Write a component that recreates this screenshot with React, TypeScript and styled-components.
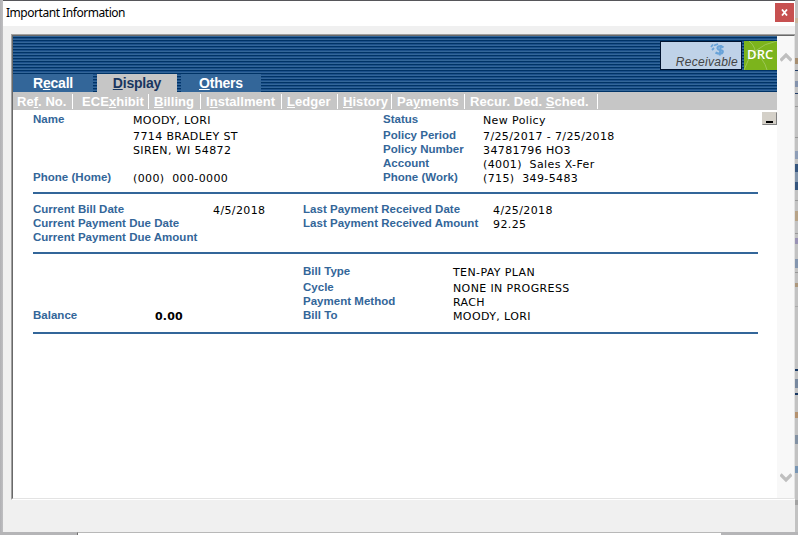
import React from "react";
import styled, { createGlobalStyle } from "styled-components";

const Global = createGlobalStyle`
  *{box-sizing:border-box}
  body{margin:0;overflow:hidden;background:#b9b9bb}
`;
const Desktop = styled.div`
  width:798px;height:535px;display:grid;grid-template-columns:3px 792px 3px;grid-template-rows:532px 3px;
  background:#b9b9bb;overflow:hidden;
`;
const Edge = styled.div`background:linear-gradient(90deg,#b0b0b4,#bfbfc1);`;
const Dialog = styled.div`
  border-top:1px solid #56565a;background:#f0f0f0;display:flex;flex-direction:column;
`;
const TitleBar = styled.div`
  height:25px;flex:none;background:#fff;display:flex;justify-content:space-between;padding:2px 1px 0 3px;
  font:12px/20px "Noto Sans",sans-serif;color:#000;letter-spacing:-0.46px;
`;
const Close = styled.button`
  width:19px;height:19px;border:0;padding:0;background:#c75050;display:flex;align-items:center;justify-content:center;
`;
const Frame = styled.div`
  margin:8px 0 0 8px;height:466px;border:1px solid;border-color:#a0a0a0 #fff #fff #a0a0a0;border-right-width:0;
`;
const Inner = styled.div`
  height:464px;border:1px solid;border-color:#696969 #e3e3e3 #e3e3e3 #696969;display:flex;background:#fff;
`;
const Page = styled.div`width:764px;flex:none;`;
const Header = styled.div`
  height:56px;display:flex;flex-direction:column;justify-content:space-between;
  background:repeating-linear-gradient(180deg,#336699 0 1px,#003366 1px 2px,#1c508a 2px 3px);
`;
const Logos = styled.div`display:flex;justify-content:flex-end;gap:2px;padding-top:5px;height:34px;`;
const Receivable = styled.div`
  width:82px;height:29px;border:1px solid #001330;background:#bfd2e8;display:flex;flex-direction:column;align-items:flex-end;
  padding:1px 3px 0 0;font:italic 12px/13px "Liberation Sans",sans-serif;color:#444;letter-spacing:.28px;
  svg{margin-right:12px;flex:none}
`;
const Drc = styled.div`
  width:33px;height:29px;background:#7cb41c;display:grid;
  font:600 13px/27px "Open Sans",sans-serif;color:#fff;letter-spacing:.1px;
  >*{grid-area:1/1} span{padding-left:3px}
`;
const Tabs = styled.div`display:flex;gap:4px;`;
const Tab = styled.div<{ $active?: boolean }>`
  width:80px;height:18px;text-align:center;font:bold 14px/19px "Liberation Sans",sans-serif;letter-spacing:-.2px;
  color:${p => p.$active ? "#193660" : "#fff"};background:${p => p.$active ? "#c6c6c6" : "#336699"};
  u{text-underline-offset:1px;text-decoration-thickness:1px}
`;
const Menu = styled.div`
  height:18px;background:#c6c6c6;display:flex;padding:1px 0 0 4px;
  font:bold 13px/17px "Liberation Sans",sans-serif;color:#fff;letter-spacing:.05px;
`;
const MenuItem = styled.span<{ $w: number; $pad?: number }>`
  width:${p => p.$w}px;padding-left:${p => p.$pad ?? 0}px;flex:none;white-space:nowrap;display:flex;justify-content:space-between;
  u{text-underline-offset:1px;text-decoration-thickness:1px}
  i{width:1px;height:15px;background:#fff;margin:1px 5px 0 0}
`;
const Content = styled.div`display:grid;grid-template-columns:1fr 15px;padding-left:20px;padding-top:2px;`;
const Sheet = styled.div`width:725px;`;
const Section = styled.div<{ $cols: string; $top: number; $h: number; $first: number }>`
  display:grid;grid-template-columns:${p => p.$cols};grid-template-rows:${p => p.$first}px;grid-auto-rows:14px;
  height:${p => p.$h}px;padding-top:${p => p.$top}px;border-bottom:2px solid #336699;
`;
const Label = styled.span`
  font:bold 11.5px/14px "Liberation Sans",sans-serif;color:#336699;letter-spacing:.02px;white-space:pre;
`;
const Value = styled.span<{ $bold?: boolean; $pad?: number }>`
  font:${p => p.$bold ? "bold" : "normal"} 11px/18px "DejaVu Sans",sans-serif;color:#000;white-space:pre;
  letter-spacing:${p => p.$bold ? .2 : .38}px;padding-left:${p => p.$pad ?? 0}px;
`;
const Minimize = styled.button`
  width:15px;height:13px;padding:0;border:1px solid;border-color:#d4d0c8 #808080 #808080 #d4d0c8;background:#d4d0c8;
  display:flex;align-items:flex-end;justify-content:center;
  &::after{content:"";width:7px;height:2px;margin-bottom:1px;background:#000}
`;
const Scroll = styled.div`
  width:17px;background:#f8f8f8;display:flex;flex-direction:column;justify-content:space-between;align-items:center;padding:15px 0 14px;
`;
const SideStrip = styled.div`background:#c2c2c2;display:flex;flex-direction:column;`;
const Mark = styled.i<{ $gap: number; $h: number; $c: string }>`
  display:block;flex:none;margin-top:${p => p.$gap}px;height:${p => p.$h}px;background:${p => p.$c};
`;
const Bottom = styled.div`
  grid-column:1/-1;display:grid;grid-template-columns:77px 644px 77px;
`;
const BottomPart = styled.div<{ $white?: boolean }>`
  background:${p => p.$white ? "#fff" : "#b5b5b7"};
  border-top:${p => p.$white ? "1px solid #b8b8b8" : "0"};border-left:${p => p.$white ? "1px solid #707070" : "0"};
`;

const menu: [React.ReactNode, number, number?][] = [
  [<>Re<u>f</u>. No.</>, 61], [<>ECE<u>x</u>hibit</>, 76, 4], [<><u>B</u>illing</>, 52], [<>I<u>n</u>stallment</>, 81],
  [<><u>L</u>edger</>, 56], [<><u>H</u>istory</>, 54], [<>Pa<u>y</u>ments</>, 73], [<>Recur. Ded. <u>S</u>ched.</>, 133],
];
const customer = [
  ["Name", "MOODY, LORI", "Status", "New Policy"],
  ["", "7714 BRADLEY ST", "Policy Period", "7/25/2017 - 7/25/2018"],
  ["", "SIREN, WI 54872", "Policy Number", "34781796 HO3"],
  ["", "", "Account", "(4001)  Sales X-Fer"],
  ["Phone (Home)", "(000)  000-0000", "Phone (Work)", "(715)  349-5483"],
];
const dates = [
  ["Current Bill Date", "4/5/2018", "Last Payment Received Date", "4/25/2018"],
  ["Current Payment Due Date", "", "Last Payment Received Amount", "92.25"],
  ["Current Payment Due Amount", "", "", ""],
];
const billing = [
  ["", "", "Bill Type", "TEN-PAY PLAN"], ["", "", "Cycle", "NONE IN PROGRESS"],
  ["", "", "Payment Method", "RACH"], ["Balance", "0.00", "Bill To", "MOODY, LORI"],
];
// Slivers of the window behind the dialog: gap above, height, colour.
const marks: [number, number, string][] = [
  [18, 5, "#c9b8a0"], [35, 6, "#a58d70"], [6, 1, "#223d66"], [10, 6, "#8493ad"], [6, 1, "#223d66"], [12, 1, "#999"],
  [30, 1, "#999"], [13, 8, "#8e9eb7"], [5, 8, "#36567f"], [0, 10, "#8396ad"], [0, 8, "#36567f"], [10, 1, "#999"],
  [10, 10, "#b7a387"], [12, 1, "#999"], [4, 6, "#9992b4"], [15, 9, "#8496af"], [4, 1, "#999"], [10, 4, "#ad987d"],
  [19, 1, "#aaa"], [62, 2, "#173762"], [8, 9, "#78899f"], [5, 2, "#173762"], [17, 6, "#b49270"], [17, 9, "#8291a3"],
  [22, 7, "#7895b3"], [27, 5, "#a3a3a3"],
];
const Fields = ({ rows, bold }: { rows: string[][]; bold?: boolean }) => <>{rows.map((r, i) =>
  <React.Fragment key={i}>
    <Label>{r[0]}</Label><Value $bold={bold} $pad={bold ? 2 : 0}>{r[1]}</Value><Label>{r[2]}</Label><Value>{r[3]}</Value>
  </React.Fragment>)}</>;

export default function App() {
  return <><Global /><Desktop>
    <Edge />
    <Dialog>
      <TitleBar>Important Information
        <Close aria-label="Close"><svg width="7" height="7" viewBox="0 0 7 7"><path d="M1 .5L6 6.5M6 .5L1 6.5" stroke="#fff" strokeWidth="1.8" /></svg></Close>
      </TitleBar>
      <Frame><Inner>
        <Page>
          <Header>
            <Logos>
              <Receivable>
                <svg width="16" height="13" viewBox="0 0 16 13" fill="none" stroke="#69a3d8">
                  <path d="M13.5 4.5C11 2.5 7 3 7.5 5.5S13.5 6.5 12.8 9 8 11 5.5 9.5M10.8 2L9.8 12.5" strokeWidth="2.1" />
                  <path d="M1 4L3 1.5M4 2.5L8 1M2 7L4 5" strokeWidth="1.8" />
                </svg>Receivable
              </Receivable>
              <Drc>
                <svg width="33" height="29" viewBox="0 0 33 29" fill="none" stroke="#a5ca65" strokeWidth=".8">
                  <path d="M5 0Q13 6 11 17M0 29Q7 5 33 0M9 11Q20 17 23 29" />
                </svg><span>DRC</span>
              </Drc>
            </Logos>
            <Tabs><Tab>R<u>e</u>call</Tab><Tab $active><u>D</u>isplay</Tab><Tab><u>O</u>thers</Tab></Tabs>
          </Header>
          <Menu>{menu.map(([text, w, pad], i) => <MenuItem key={i} $w={w} $pad={pad}><span>{text}</span><i /></MenuItem>)}</Menu>
          <Content>
            <Sheet>
              <Section $cols="100px 250px 100px 1fr" $top={0} $h={82} $first={16}><Fields rows={customer} /></Section>
              <Section $cols="180px 90px 190px 1fr" $top={8} $h={60} $first={14}><Fields rows={dates} /></Section>
              <Section $cols="120px 150px 150px 1fr" $top={10} $h={80} $first={16}><Fields rows={billing} bold /></Section>
            </Sheet>
            <Minimize aria-label="Minimize" />
          </Content>
        </Page>
        <Scroll>
          <svg width="12" height="11" viewBox="0 0 12 11"><path d="M.5 9.5L6 4L11.5 9.5" fill="none" stroke="#bfbfbf" strokeWidth="3.2" /></svg>
          <svg width="12" height="11" viewBox="0 0 12 11"><path d="M.5 1.5L6 7L11.5 1.5" fill="none" stroke="#bfbfbf" strokeWidth="3.2" /></svg>
        </Scroll>
      </Inner></Frame>
    </Dialog>
    <SideStrip>{marks.map(([g, h, c], i) => <Mark key={i} $gap={g} $h={h} $c={c} />)}</SideStrip>
    <Bottom><BottomPart /><BottomPart $white /><BottomPart /></Bottom>
  </Desktop></>;
}
